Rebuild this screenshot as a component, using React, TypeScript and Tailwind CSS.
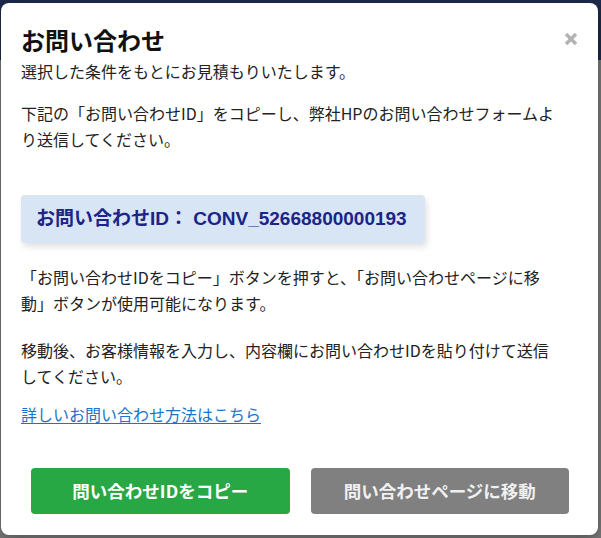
import React from "react";

const jp = { fontFamily: '"Noto Sans CJK JP", "Noto Sans", sans-serif' };
const idFont = { fontFamily: '"Liberation Sans", "Noto Sans CJK JP", sans-serif' };

function CloseIcon() {
  return (
    <svg width="14" height="14" viewBox="0 0 14 14" aria-hidden="true">
      <path d="M2 2 L12 12 M12 2 L2 12" stroke="#b3b3b3" strokeWidth="3.4" strokeLinecap="butt" />
    </svg>
  );
}

function ContactModal() {
  return (
    <div
      className="absolute left-[1px] top-[3px] flex h-[532px] w-[597px] flex-col rounded-lg bg-white pl-[20px] pr-[21px] pt-[22px] shadow-[0_4px_16px_rgba(0,0,0,0.35)]"
      style={jp}
    >
      <div className="flex items-start justify-between">
        <h2 className="text-[24px] font-bold leading-[30px] text-[#111]">お問い合わせ</h2>
        <button className="mr-[-1px] mt-[7px]" aria-label="閉じる">
          <CloseIcon />
        </button>
      </div>
      <p className="mt-[3px] text-[16px] leading-[26px] text-[#222]">
        選択した条件をもとにお見積もりいたします。
      </p>
      <p className="mt-[16px] pr-[19px] text-[16px] leading-[26px] text-[#222]">
        下記の「お問い合わせID」をコピーし、弊社HPのお問い合わせフォームより送信してください。
      </p>

      <div
        className="mt-[43px] flex h-[48px] w-[404px] items-center rounded-[4px] bg-[#d7e5f5] pl-[15px] shadow-[2px_4px_6px_rgba(0,0,0,0.12)]"
        style={idFont}
      >
        <span className="text-[19px] font-bold text-[#1c2488]">
          お問い合わせID： CONV_52668800000193
        </span>
      </div>

      <p className="mt-[21px] pr-[19px] text-[16px] leading-[26px] text-[#222]">
        「お問い合わせIDをコピー」ボタンを押すと、「お問い合わせページに移動」ボタンが使用可能になります。
      </p>
      <p className="mt-[21px] pr-[19px] text-[16px] leading-[26px] text-[#222]">
        移動後、お客様情報を入力し、内容欄にお問い合わせIDを貼り付けて送信してください。
      </p>
      <a href="#" className="mt-[12px] self-start text-[16px] leading-[26px] text-[#1a74c9] underline underline-offset-2">
        詳しいお問い合わせ方法はこちら
      </a>

      <div className="mt-[41px] flex gap-[21px] pl-[10px] pr-[8px]">
        <button className="h-[46px] flex-1 rounded-[4px] bg-[#28a745] text-[17.5px] font-bold text-white">
          問い合わせIDをコピー
        </button>
        <button className="h-[46px] flex-1 rounded-[4px] bg-[#808080] text-[17.5px] font-bold text-[#f0f0f0]">
          問い合わせページに移動
        </button>
      </div>
    </div>
  );
}

export default function App() {
  return (
    <div className="relative h-[538px] w-[601px] overflow-hidden bg-[#6e6e6e]">
      <div className="flex h-full flex-col">
        <div className="h-[60px] bg-[#1e2a4c]" />
        <div className="flex-1 bg-[#7a7a7a]" />
      </div>
      <ContactModal />
    </div>
  );
}
